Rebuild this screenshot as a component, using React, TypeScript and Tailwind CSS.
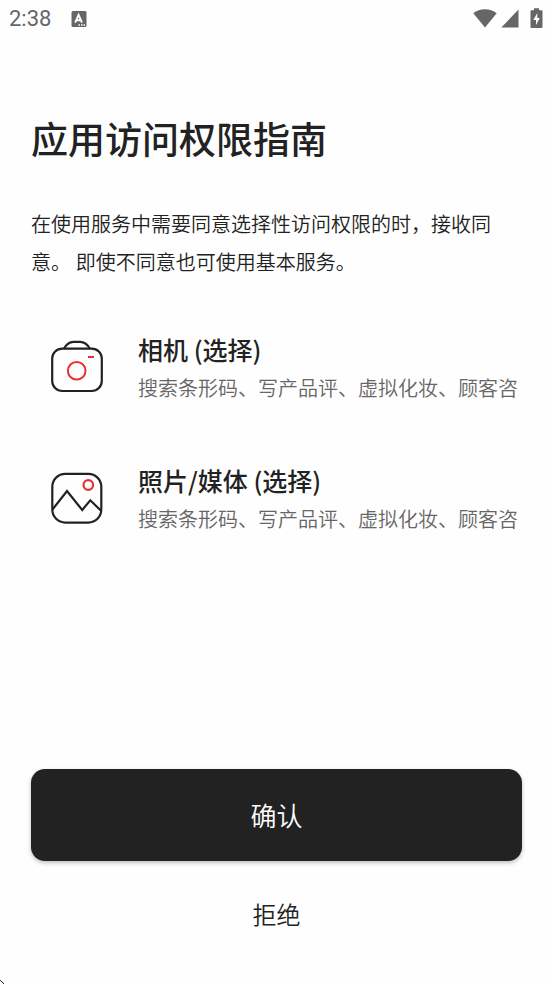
const permissions = [
    {
        title: "相机 (选择)",
        description: "搜索条形码、写产品评、虚拟化妆、顾客咨",
        Icon: CameraIcon,
    },
    {
        title: "照片/媒体 (选择)",
        description: "搜索条形码、写产品评、虚拟化妆、顾客咨",
        Icon: PhotoIcon,
    },
];

function CameraIcon() {
    return (
        <svg width="52" height="54" viewBox="0 0 52 54" fill="none" strokeWidth="2.2" aria-hidden="true">
            <path d="M12.8 9C15 4.6 18.6 1.8 22.5 1.8H29C33 1.8 36.8 4.6 39 9" stroke="#222" />
            <rect x="1.2" y="8.6" width="49.6" height="42.4" rx="10" stroke="#222" />
            <circle cx="25.7" cy="30.7" r="8.8" stroke="#e83030" strokeWidth="2" />
            <path d="M37 17H43" stroke="#e83030" strokeWidth="2" />
        </svg>
    );
}

function PhotoIcon() {
    return (
        <svg width="52" height="54" viewBox="0 0 52 54" fill="none" strokeWidth="2.2" aria-hidden="true">
            <rect x="1.3" y="2.8" width="49" height="48.8" rx="13" stroke="#222" />
            <path d="M1.5 38.5L16 20L31.2 39L39.3 29.3L50.3 40" stroke="#222" />
            <circle cx="37.3" cy="14" r="4.8" stroke="#e83030" />
        </svg>
    );
}

function StatusBar() {
    return (
        <header className="flex h-[38px] items-center justify-between pr-[10px] pl-[9px] text-[#666]">
            <div className="flex items-center gap-5">
                <span className="text-[22px] leading-6 font-normal">2:38</span>
                <svg width="16" height="16" viewBox="0 0 16 16" aria-hidden="true">
                    <rect x="0.5" width="15" height="16" rx="1.5" fill="currentColor" />
                    <path d="M4.2 11.6L7.6 3.8L11 11.6M5.4 9.2H9.8" fill="none" stroke="#fff" strokeWidth="1.9" />
                    <path d="M7.5 14H9M10 14H11.5M12.5 14H14" stroke="#fff" strokeWidth="1.3" />
                </svg>
            </div>
            <div className="flex items-center" aria-hidden="true">
                <svg width="24" height="20" viewBox="0 0 24 20" fill="currentColor">
                    <path d="M12 18.5L0.3 4.3C3.6 1.6 7.6 0.3 12 0.3S20.4 1.6 23.7 4.3Z" />
                </svg>
                <svg className="ml-1" width="18" height="20" viewBox="0 0 18 20" fill="currentColor">
                    <path d="M0.3 18.5H17.5V0.5Z" />
                </svg>
                <svg className="ml-[11px] overflow-visible" width="13" height="20" viewBox="0 0 13 20" fill="currentColor">
                    <path d="M4 -0.8H9V1.2H11.5Q12.5 1.2 12.5 2.2V18Q12.5 19 11.5 19H1.5Q0.5 19 0.5 18V2.2Q0.5 1.2 1.5 1.2H4Z" />
                    <path d="M7.3 4L3.3 11H6V16L9.8 9H7.3Z" fill="#fff" />
                </svg>
            </div>
        </header>
    );
}

export default function App() {
    return (
        <div className="relative flex min-h-screen flex-col bg-[#fefefe] font-[Roboto,'Noto_Sans_CJK_SC',sans-serif] font-[350] text-[#222]">
            <StatusBar />
            <main className="flex flex-1 flex-col px-[31px] pt-[82px] pb-[38px]">
                <h1 className="text-[37px] leading-[44px] font-medium">应用访问权限指南</h1>
                <p className="mt-[42px] text-[20px] leading-[38px]">
                    在使用服务中需要同意选择性访问权限的时，接收同意。 即使不同意也可使用基本服务。
                </p>
                <ul className="mt-[51px] flex flex-col gap-[55px]">
                    {permissions.map(({ title, description, Icon }) => (
                        <li key={title} className="flex pl-5">
                            <div className="shrink-0 pt-[7px]">
                                <Icon />
                            </div>
                            <div className="ml-[35px] min-w-0 flex-1">
                                <h2 className="mb-1 font-['Noto_Sans_CJK_SC',sans-serif] text-[25px] leading-8 font-medium">
                                    {title}
                                </h2>
                                <p className="overflow-hidden text-[20px] leading-10 whitespace-nowrap text-[#666]">
                                    {description}
                                </p>
                            </div>
                        </li>
                    ))}
                </ul>
                <div className="mt-auto flex flex-col gap-6">
                    <button
                        type="button"
                        className="h-[92px] rounded-[14px] bg-[#222] pt-1 text-[26px] text-white shadow-[0_2px_4px_rgba(0,0,0,0.25)]"
                    >
                        确认
                    </button>
                    <button type="button" className="h-[61px] text-[24px]">
                        拒绝
                    </button>
                </div>
            </main>
            <svg className="absolute bottom-0 left-0" width="4" height="4" viewBox="0 0 4 4" aria-hidden="true">
                <path d="M0 0H1V1H2V2H3V3H4V4H3V3H2V2H1V1H0Z" fill="#222" />
            </svg>
        </div>
    );
}
